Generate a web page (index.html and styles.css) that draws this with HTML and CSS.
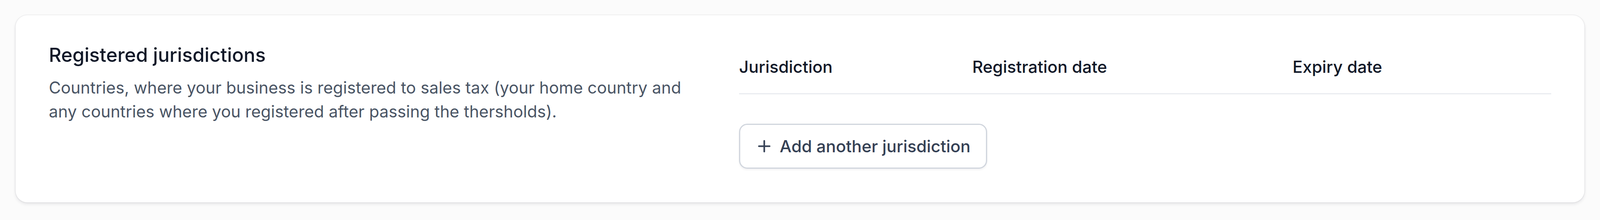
FILE: index.html
```html
<!DOCTYPE html>
<html lang="en">
<head>
  <meta charset="UTF-8">
  <title>Registered jurisdictions</title>
  <meta name="viewport" content="width=device-width, initial-scale=1">
  <link rel="stylesheet" href="styles.css">
</head>
<body>
  <section class="card">
    <div class="intro">
      <h2>Registered jurisdictions</h2>
      <p>Countries, where your business is registered to sales tax (your home country and any countries where you registered after passing the thersholds).</p>
    </div>
    <div class="jurisdictions">
      <div class="table-head">
        <span>Jurisdiction</span>
        <span>Registration date</span>
        <span>Expiry date</span>
      </div>
      <button class="add-btn" type="button">
        <svg class="plus" viewBox="0 0 24 24" fill="none" stroke="currentColor" stroke-width="3" stroke-linecap="round">
          <path d="M12 2v20M2 12h20"/>
        </svg>
        Add another jurisdiction
      </button>
    </div>
  </section>
</body>
</html>
```

FILE: styles.css
```css
html {
  overflow: hidden;
}

body {
  font-family: Inter, 'Noto Sans', sans-serif;
  margin: 0;
  padding: 39px 40px 30px;
  background: #fbfbfb;
  color: #101828;
}

.card {
  display: grid;
  grid-template-columns: 1653px 1fr;
  column-gap: 114px;
  padding: 64px 85px 86px 85px;
  background: #fff;
  border-radius: 30px;
  box-shadow: 0 0 0 2px rgba(16, 24, 40, 0.04), 0 4px 8px rgba(16, 24, 40, 0.1);
}

.intro h2 {
  margin: 0;
  font-size: 49.5px;
  line-height: 75px;
  font-weight: 500;
  color: #101828;
}

.intro p {
  margin: 15px 0 0;
  font-size: 42.2px;
  line-height: 61px;
  color: #4a5565;
}

.table-head {
  display: grid;
  grid-template-columns: 597px 820px 1fr;
  padding: 36px 0 35px;
  border-bottom: 3px solid #eaecf0;
  font-size: 42.67px;
  line-height: 64px;
  font-weight: 500;
  color: #101828;
}

.add-btn {
  display: flex;
  align-items: center;
  gap: 23px;
  height: 115px;
  margin-top: 75px;
  padding: 0 40px 0 45px;
  background: #fff;
  border: 3px solid #d0d5dd;
  border-radius: 21px;
  box-shadow: 0 3px 5px rgba(16, 24, 40, 0.06);
  font-family: inherit;
  font-size: 42.67px;
  font-weight: 500;
  color: #344054;
}

.plus {
  width: 33px;
  height: 33px;
}
```
